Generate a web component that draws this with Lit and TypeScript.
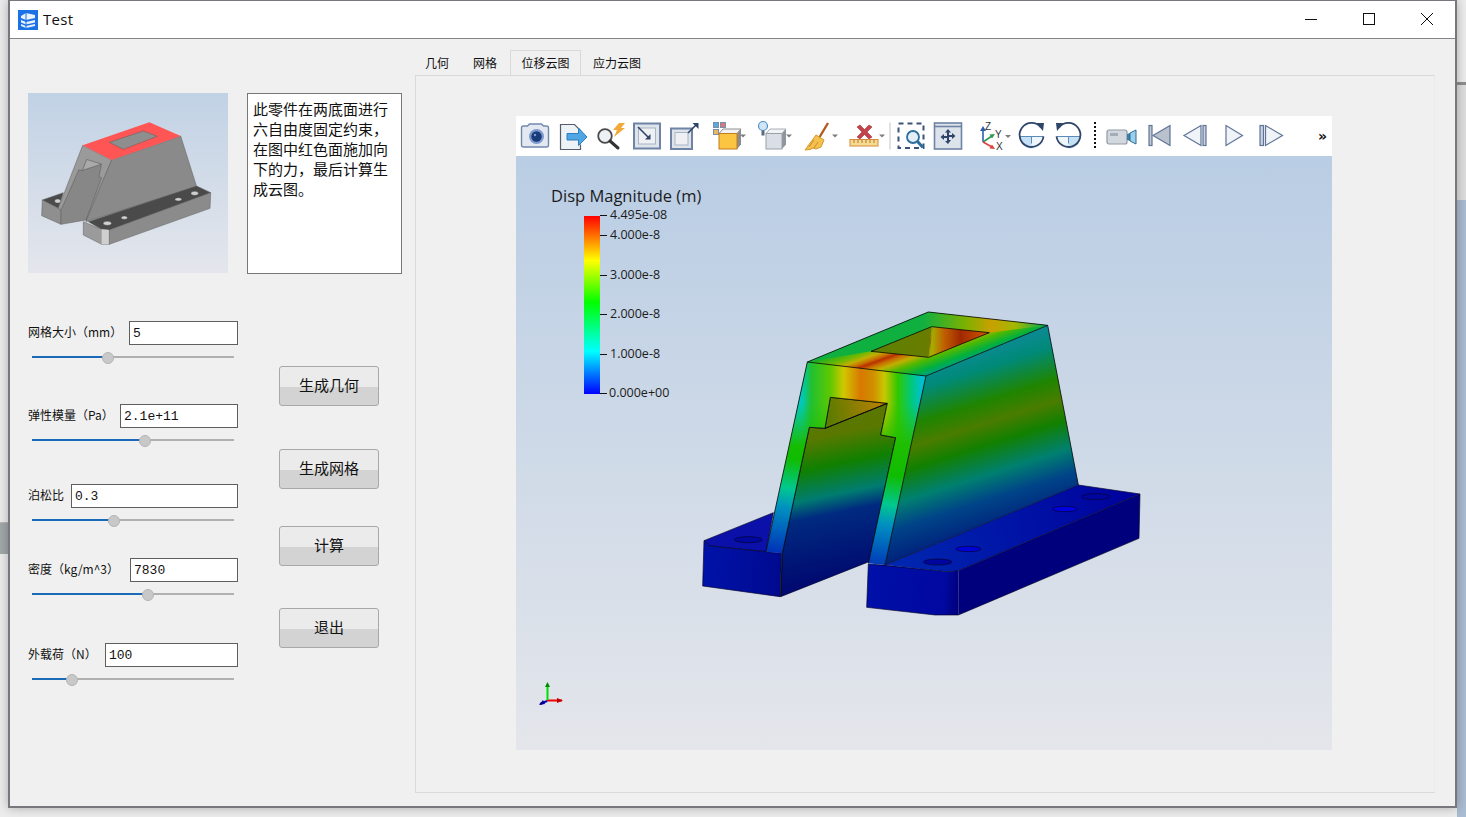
import { LitElement, css, html, svg } from "lit";
import { customElement, state } from "lit/decorators.js";

const NAVY = "#5f7497";
const PALE = "#c9d2df";

// little dropdown caret used by the toolbar buttons
const caret = (x: number) => svg`<path d="M${x} 18.5h6l-3 3z" fill="#7d7d7d"/>`;

const toolbarIcons = [
  {
    w: 37,
    icon: svg`<path d="M3.5 12q0-2 2-2h4l2-2h12l2 2h3q2 0 2 2v17q0 2-2 2h-23q-2 0-2-2z" fill="#e3e8f1" stroke="#7188ad" stroke-width="1.4"/>
      <circle cx="18.5" cy="20.5" r="7.5" fill="#7c9ace"/><circle cx="18.5" cy="20.5" r="5.2" fill="#1a3a78"/><circle cx="17" cy="19" r="1.2" fill="#7f9bd0"/>`,
  },
  {
    w: 37,
    icon: svg`<path d="M5.5 8.5h14l6 6v19h-20z" fill="#eef1f5"/>
      <path d="M25.5 19.5v-5l-6-6h-14v25h20v-5" fill="none" stroke="#555d6b" stroke-width="1.2"/>
      <path d="M12 17.5h11.5v-5.5l8.500 9-8.500 8.500v-5.500H12z" fill="#4fa6e2" stroke="#2a7fc0"/>`,
  },
  {
    w: 37,
    icon: svg`<circle cx="13" cy="20" r="6.800" fill="#eef1f4" stroke="#4a4a4a" stroke-width="1.800"/>
      <path d="M18 25l8 7" stroke="#333" stroke-width="3" stroke-linecap="round"/>
      <path d="M27 7l6 0-4 5 4 0-11 9 3-7-4 0z" fill="#f2a93a"/>`,
  },
  {
    w: 37,
    icon: svg`<rect x="5" y="7.5" width="26" height="25" fill="#dfe4ea" stroke="#6e83a5" stroke-width="2"/>
      <rect x="9.5" y="12" width="17" height="16" fill="#eef0f3" stroke="#aab5c4"/>
      <path d="M9 11l11 11" stroke="#2e4468" stroke-width="1.6"/><path d="M21.5 23.5v-5.5l-5.5 5.500z" fill="#2e4468"/>`,
  },
  {
    w: 37,
    icon: svg`<rect x="5" y="12.5" width="21" height="20.5" fill="#dfe4ea" stroke="#6e83a5" stroke-width="2"/>
      <rect x="9" y="16.5" width="13" height="12.5" fill="#eef0f3" stroke="#aab5c4"/>
      <path d="M22 17L31 8" stroke="#2e4468" stroke-width="1.6"/><path d="M32.5 7v6l-6-6z" fill="#2e4468"/>`,
  },
  {
    w: 50,
    icon: svg`<rect x="10.5" y="6.5" width="5" height="5" fill="#5da8dc" stroke="#7a8fa8"/>
      <rect x="17.5" y="6.5" width="5" height="5" fill="#d9777a" stroke="#7a8fa8"/>
      <rect x="10.5" y="13.5" width="5" height="5" fill="#e8b866" stroke="#7a8fa8"/>
      <path d="M16 17.5l4-4.500h18l-4 4.500z" fill="#f2f2f2" stroke="#8f8f8f"/>
      <path d="M34 17.5l4-4.500v15.500l-4 4.500z" fill="#8c8c8c"/>
      <rect x="16" y="17.5" width="18" height="15.5" fill="#fbc441" stroke="#c07d1e"/>${caret(37)}`,
  },
  {
    w: 48,
    icon: svg`<circle cx="10" cy="10" r="4.5" fill="#cfe6f8" stroke="#4f8fc4" stroke-width="1.2"/>
      <path d="M8.5 14.5h3v5h-3z" fill="#5b6b80"/>
      <path d="M13 17.5l4-4.500h16l-4 4.500z" fill="#f0f2f4" stroke="#a8aeb6"/>
      <path d="M29 17.5l4-4.500v15.500l-4 4.500z" fill="#8f959d"/>
      <rect x="13" y="17.5" width="16" height="15.5" fill="#dadfe6" stroke="#98a0aa"/>${caret(33)}`,
  },
  {
    w: 47,
    icon: svg`<path d="M27 7L18 22" stroke="#b35a1e" stroke-width="2.4"/>
      <path d="M15 19l8 5-3 7-5 2-3-1-3 1.500-5 .5z" fill="#f4c04e" stroke="#d49a2c"/>
      <path d="M13 24l-5 7M17 26l-4 6" stroke="#c98f25"/>${caret(31)}`,
  },
  {
    w: 38,
    icon: svg`<path d="M9 11l3-2 4.500 4.500 4.500-4.500 3 2-5 5 5 5-3 2-4.500-4.500-4.500 4.500-3-2 5-5z" fill="#c4424a" stroke="#a5323a" stroke-width=".6"/>
      <rect x="2" y="23.5" width="28" height="6.5" fill="#f6dc91" stroke="#d48a3a"/>
      <path d="M6 24v3M10 24v3M14 24v3M18 24v3M22 24v3M26 24v3" stroke="#b5742a"/>${caret(31)}`,
  },
  { w: 7, icon: svg`<path d="M4 6.5v27" stroke="#c4c4c4"/>` },
  {
    w: 37,
    icon: svg`<rect x="5.5" y="7.5" width="25" height="24.5" fill="none" stroke="#3c5378" stroke-width="2" stroke-dasharray="5 4"/>
      <circle cx="20" cy="21" r="6" fill="#e3eef8" stroke="#2a6f9c" stroke-width="1.8"/>
      <path d="M24.5 25.5L30 31.5" stroke="#2a6f9c" stroke-width="3"/>`,
  },
  {
    w: 37,
    icon: svg`<rect x="4.5" y="7" width="27" height="26" fill="#dde3eb" stroke="#6e83a5" stroke-width="1.6"/>
      <path d="M4.5 10.5h27" stroke="#6e83a5" stroke-width="1.6"/>
      <path d="M18 13l3 3.500h-2V19h3v-2l3.500 3-3.500 3v-2h-3v3h2L18 28l-3-3h2v-3h-3v2l-3.500-3L14 18v2h3v-3.500h-2z" fill="#2e4468"/>`,
  },
  {
    w: 46,
    icon: svg`<path d="M16 26V14" stroke="#2d5fb5" stroke-width="1.6"/><path d="M16 10l-3 5h6z" fill="#2d5fb5"/>
      <path d="M16 26l9-6" stroke="#2e9a4f" stroke-width="1.6"/><path d="M28 18l-5.500.5 2.500 4z" fill="#2e9a4f"/>
      <path d="M16 26l9 5" stroke="#e04040" stroke-width="1.6"/><path d="M28 33l-5.500-.5 2.500-4z" fill="#e04040"/>
      <text x="18" y="14" class="axis-letter">Z</text><text x="28" y="22" class="axis-letter">Y</text><text x="29" y="34" class="axis-letter">X</text>
      <path d="M38 19h6l-3 3z" fill="#7d7d7d"/>`,
  },
  {
    w: 37,
    icon: svg`<path d="M6.5 20.5a12 12 0 0 0 24 0z" fill="#c4e0f5"/><path d="M18.5 20.5v12a12 12 0 0 0 12-12z" fill="#eef6fc"/>
      <path d="M6.5 20.5h24M18.5 20.5v7" stroke="#5b8bb8"/>
      <path d="M28 11.5A12 12 0 1 0 30.5 20.5" fill="none" stroke="#2f4569" stroke-width="1.8"/><path d="M23 7l8 0-1 8z" fill="#2f4569"/>`,
  },
  {
    w: 37,
    icon: svg`<path d="M6.5 20.5a12 12 0 0 0 24 0z" fill="#eef6fc"/><path d="M18.5 20.5h12a12 12 0 0 1-12 12z" fill="#c4e0f5"/>
      <path d="M6.5 20.5h24M18.5 20.5v7" stroke="#5b8bb8"/>
      <path d="M9 11.5A12 12 0 1 1 6.5 20.5" fill="none" stroke="#2f4569" stroke-width="1.8"/><path d="M14 7l-8 0 1 8z" fill="#2f4569"/>`,
  },
  { w: 17, icon: svg`<path d="M8 6v26" stroke="#111" stroke-width="2" stroke-dasharray="2 2"/>` },
  {
    w: 37,
    icon: svg`<rect x="3" y="14" width="20" height="14" rx="2" fill="#d3d8df" stroke="#8f99a8" stroke-width="1.2"/>
      <rect x="6" y="17" width="8" height="3" fill="#a4acb7"/>
      <path d="M23 18l3-1v8l-3-1z" fill="#3c7ea8"/><path d="M26 17l6-3v14l-6-3z" fill="#9bd0ec" stroke="#2f6c92"/>`,
  },
  {
    w: 37,
    icon: svg`<rect x="8" y="9.5" width="3" height="20" fill="#c0c8d3" stroke="${NAVY}" stroke-width="1.2"/><path d="M29 9.5v20L12 19.500z" fill="#b9c1cc" stroke="${NAVY}" stroke-width="1.2"/>`,
  },
  {
    w: 37,
    icon: svg`<path d="M23 9.5v20L6 19.500z" fill="#f0f3f7" stroke="${NAVY}" stroke-width="1.2"/><rect x="25" y="9.5" width="3" height="20" fill="${PALE}" stroke="${NAVY}" stroke-width="1.2"/>`,
  },
  { w: 37, icon: svg`<path d="M11 9.5v20l16.500-10z" fill="#f0f3f7" stroke="${NAVY}" stroke-width="1.2"/>` },
  {
    w: 37,
    icon: svg`<rect x="8" y="9.5" width="3.5" height="20" fill="${PALE}" stroke="${NAVY}" stroke-width="1.2"/><path d="M13.5 9.5v20l17-10z" fill="#f0f3f7" stroke="${NAVY}" stroke-width="1.2"/>`,
  },
];

const fields = [
  { label: "网格大小（mm）", labelWidth: 101, value: "5", filled: 75 },
  { label: "弹性模量（Pa）", labelWidth: 92, value: "2.1e+11", filled: 112 },
  { label: "泊松比", labelWidth: 43, value: "0.3", filled: 81 },
  { label: "密度（kg/m^3）", labelWidth: 102, value: "7830", filled: 115 },
  { label: "外载荷（N）", labelWidth: 77, value: "100", filled: 39 },
];

const actions = ["生成几何", "生成网格", "计算", "退出"];
const tabs = ["几何", "网格", "位移云图", "应力云图"];
const legendTicks = [
  { y: 215, text: "4.495e-08", x: 610 },
  { y: 235, text: "4.000e-8", x: 610 },
  { y: 275, text: "3.000e-8", x: 610 },
  { y: 314, text: "2.000e-8", x: 610 },
  { y: 354, text: "1.000e-8", x: 610 },
  { y: 393, text: "0.000e+00", x: 609 },
];

@customElement("app-root")
export class AppRoot extends LitElement {
  @state() activeTab = 2;

  static styles = css`
    :host {
      display: block;
      position: relative;
      width: 1466px;
      height: 817px;
      overflow: hidden;
      background: #ececec;
      font-family: "Noto Sans CJK SC", "Noto Sans", sans-serif;
      color: #111;
    }
    .desk-left {
      position: absolute;
      left: 0;
      top: 522px;
      width: 8px;
      height: 31px;
      background: #a2a8aa;
      border-top: 1px solid #b8b8b8;
    }
    .desk-right {
      position: absolute;
      left: 1457px;
      top: 200px;
      width: 9px;
      height: 617px;
      background: #aabcd2;
    }
    .desk-band {
      position: absolute;
      left: 1457px;
      top: 82px;
      width: 9px;
      height: 118px;
      background: #dedede;
      border-top: 3px solid #8e8e8e;
    }
    .window {
      position: relative;
      box-sizing: border-box;
      margin-left: 8px;
      width: 1449px;
      height: 808px;
      display: flex;
      flex-direction: column;
      background: #f0f0f0;
      border: 2px solid #77777d;
      border-top-width: 1px;
      box-shadow: 0 0 10px rgba(0, 0, 0, 0.28);
    }
    .titlebar {
      flex: none;
      box-sizing: border-box;
      height: 38px;
      display: flex;
      align-items: center;
      padding-left: 8px;
      background: #fff;
      border-bottom: 1px solid #85858a;
    }
    .titlebar .logo {
      flex: none;
      margin-right: 5px;
    }
    .title {
      flex: 1;
      padding-bottom: 2px;
      font-family: "Open Sans", sans-serif;
      font-size: 15px;
      letter-spacing: 0.3px;
    }
    .winbtn {
      width: 58px;
      height: 37px;
      display: flex;
      align-items: center;
      justify-content: center;
      padding-bottom: 2px;
      box-sizing: border-box;
    }
    .winbtn:last-child {
      margin-right: -1px;
    }
    .content {
      flex: 1;
      min-height: 0;
      display: flex;
    }
    .left {
      flex: none;
      box-sizing: border-box;
      width: 405px;
      padding: 54px 0 0 18px;
    }
    .intro {
      display: flex;
      gap: 19px;
      margin-bottom: 47px;
    }
    .preview {
      display: block;
      width: 200px;
      height: 180px;
    }
    .note {
      box-sizing: border-box;
      width: 155px;
      height: 181px;
      padding: 5px 5px;
      background: #fff;
      border: 1px solid #777;
      font-size: 15px;
      line-height: 20px;
    }
    .controls {
      display: flex;
    }
    .form {
      display: grid;
      grid-template-rows: 83px 80px 74px 85px 50px;
      width: 210px;
    }
    .input-row {
      display: flex;
      align-items: center;
      height: 24px;
    }
    .input-row label {
      flex: none;
      padding-bottom: 3px;
      font-size: 12px;
      white-space: nowrap;
    }
    .field {
      flex: 1;
      min-width: 0;
      box-sizing: border-box;
      height: 24px;
      line-height: 22px;
      padding: 1px 3px;
      background: #fff;
      border: 1px solid #5f5f5f;
      font-family: "Liberation Mono", monospace;
      font-size: 13px;
    }
    .slider {
      position: relative;
      width: 202px;
      height: 2px;
      margin: 11px 0 0 4px;
      background: #b0b0b0;
    }
    .slider .fill {
      height: 2px;
      background: #1a6ab8;
    }
    .slider .thumb {
      position: absolute;
      top: -4px;
      width: 10px;
      height: 10px;
      margin-left: -5px;
      border-radius: 50%;
      background: #c8c8c8;
      border: 0.5px solid #b5b5b5;
    }
    .actions {
      display: grid;
      grid-template-rows: 83px 77px 82px 40px;
      margin-left: 41px;
      padding-top: 45px;
    }
    .action {
      box-sizing: border-box;
      width: 100px;
      height: 40px;
      padding: 0 0 4px;
      border: 1px solid #a8a8a8;
      border-radius: 3px;
      background: linear-gradient(#ebebeb 0 20px, #d3d3d3 20px);
      font-family: inherit;
      font-size: 15px;
      color: #111;
    }
    .right {
      flex: none;
      width: 1020px;
      padding-top: 11px;
    }
    .tabs {
      display: flex;
      height: 25px;
      margin-left: -2px;
    }
    .tab {
      box-sizing: border-box;
      padding: 2px 11px 0;
      font-size: 12px;
      line-height: 20px;
      border: 1px solid transparent;
      border-bottom: 0;
      white-space: nowrap;
    }
    .tab.active {
      margin-left: 1px;
      padding: 2px 10.5px 0;
      border-color: #d9d9d9;
    }
    .pane {
      box-sizing: border-box;
      height: 718px;
      padding: 40px 0 0 100px;
      border: 1px solid #d9d9d9;
      border-right-color: #ebebeb;
    }
    .viewer {
      width: 816px;
      height: 634px;
      display: flex;
      flex-direction: column;
    }
    .toolbar {
      flex: none;
      height: 40px;
      display: flex;
      align-items: center;
      padding-left: 2px;
      background: #fff;
    }
    .toolbar svg {
      display: block;
      flex: none;
    }
    .axis-letter {
      font-family: "Liberation Sans", sans-serif;
      font-size: 10px;
      fill: #333;
    }
    .overflow {
      margin-left: auto;
      padding: 0 5px 0 0;
      font-family: "DejaVu Sans", sans-serif;
      font-weight: 700;
      font-size: 14px;
      color: #111;
    }
    .scene {
      display: block;
      width: 816px;
      height: 594px;
    }
    .legend-title {
      font-family: "Open Sans", sans-serif;
      font-size: 16.5px;
      fill: #1c1c1c;
    }
    .legend-label {
      font-family: "Open Sans", sans-serif;
      font-size: 12.5px;
      fill: #1c1c1c;
    }
  `;

  private renderPreview() {
    return svg`<svg class="preview" viewBox="84 279 600 540">
      <defs>
        <linearGradient id="pv-bg" x1="0" y1="0" x2="0" y2="1"><stop offset="0" stop-color="#c1d2e5"/><stop offset="1" stop-color="#e4e6ec"/></linearGradient>
      </defs>
      <rect x="84" y="279" width="600" height="540" fill="url(#pv-bg)"/>
      <g stroke="#5d5d5d" stroke-width="1.5" stroke-linejoin="round">
        <polygon points="127,600 190,578 175,625" fill="#4b4b4b"/>
        <polygon points="127,600 175,625 183,630 183,673 125,647" fill="#8f8f8f"/>
        <polygon points="236,510 247,511 305,492 297,530 305,533 258,660 183,673 183,630" fill="#878787"/>
        <polygon points="260,478 305,492 247,511" fill="#aaa"/>
        <polygon points="248,436 335,480 258,662 305,533 297,530 305,492 260,478 247,511 236,510 183,630 175,625" fill="#9a9a9a"/>
        <polygon points="335,480 542,408 590,560 258,665" fill="#8a8a8a"/>
        <polygon points="248,436 448,367 542,408 335,480" fill="#ff5555" stroke="none"/>
        <polygon points="328,427 430,393 472,409 370,448" fill="#8e8e8e"/>
        <polygon points="265,665 590,558 632,578 328,690 305,688" fill="#4a4a4a"/>
        <polygon points="250,665 305,688 328,690 328,733 305,733 250,705" fill="#9b9b9b"/>
        <polygon points="305,688 328,690 328,733 305,733" fill="#cfcfcf" stroke="none"/>
        <polygon points="328,690 632,578 630,625 328,733" fill="#8b8b8b"/>
      </g>
      <g fill="#cfd2d4" stroke="#3a3a3a">
        <ellipse cx="322" cy="670" rx="12" ry="6"/><ellipse cx="373" cy="653" rx="9" ry="5"/>
        <ellipse cx="535" cy="598" rx="10" ry="5"/><ellipse cx="584" cy="580" rx="11" ry="6"/>
        <ellipse cx="173" cy="603" rx="9" ry="6"/>
      </g>
    </svg>`;
  }

  // Model drawn in a 3x coordinate system so the outline is easy to read off
  private renderModel() {
    return svg`<g transform="translate(690 300) scale(.33333)" stroke-linejoin="round">
      <g stroke="#05052a" stroke-width="2">
        <polygon points="42,722 250,638 228,755 60,738" fill="#0a10a8"/>
        <polygon points="42,722 60,738 275,760 270,890 38,858" fill="url(#left-foot)"/>
        <ellipse cx="175" cy="719" rx="42" ry="9" fill="#0008a0"/>
        <polygon points="358,382 405,385 592,310 572,405 617,413 537,785 272,890 277,760" fill="url(#slot)"/>
        <polygon points="421,292 592,310 405,385" fill="url(#ceiling)"/>
      </g>
      <polygon points="352,186 708,228 585,795 535,790 617,413 572,405 592,310 421,292 405,385 358,382 277,760 228,755" fill="url(#arch)"/>
      <polygon points="352,186 708,228 585,795 535,790 617,413 572,405 592,310 421,292 405,385 358,382 277,760 228,755" fill="url(#arch-top)" mask="url(#arch-fade)"/>
      <polygon points="708,228 1073,76 1165,555 585,795" fill="url(#side)"/>
      <polygon points="352,186 715,36 1073,76 708,228" fill="url(#top)"/>
      <polygon points="352,186 715,36 1073,76 898,98 725,80 543,154" fill="url(#top-back)"/>
      <polygon points="543,154 725,80 716,172" fill="url(#hole-left)"/>
      <polygon points="728,80 898,98 716,172" fill="url(#hole-right)"/>
      <g fill="none" stroke="#050505" stroke-width="2.4">
        <polygon points="543,154 725,80 898,98 716,172"/>
        <path d="M728 80L716 172" stroke-width="1" stroke="#6b7a00"/>
        <path d="M352 186L715 36L1073 76L1165 555M708 228L1073 76M352 186L708 228L585 795M352 186L228 755M358 382L277 760M358 382L405 385L421 292L592 310L572 405L617 413L535 790M405 385L592 310M277 760L272 890"/>
      </g>
      <polygon points="585,795 1165,555 1350,582 805,812 770,815" fill="url(#right-top)"/>
      <polygon points="535,792 585,795 770,815 805,812 805,945 735,945 530,922" fill="url(#right-front)"/>
      <polygon points="805,812 1350,582 1347,715 805,945" fill="#00007c"/>
      <g fill="none" stroke="#05052a" stroke-width="2">
        <path d="M535 792L770 815L805 812L1350 582L1165 555L585 795M1350 582L1347 715L805 945L735 945L530 922L535 792"/>
        <ellipse cx="1217" cy="590" rx="42" ry="9" fill="#0005a0"/>
        <ellipse cx="1125" cy="627" rx="38" ry="8" fill="#0000e0"/>
        <ellipse cx="835" cy="747" rx="38" ry="8" fill="#0000d8"/>
        <ellipse cx="743" cy="786" rx="43" ry="9" fill="#0005a0"/>
      </g>
    </g>`;
  }

  private renderScene() {
    return svg`<svg class="scene" viewBox="516 156 816 594">
      <defs>
        <linearGradient id="bg" x1="0" y1="0" x2="0" y2="1"><stop offset="0" stop-color="#b9cde4"/><stop offset="1" stop-color="#e4e6eb"/></linearGradient>
        <linearGradient id="jet" x1="0" y1="0" x2="0" y2="1">
          <stop offset="0" stop-color="#ff0000"/><stop offset=".25" stop-color="#ffff00"/><stop offset=".486" stop-color="#00ff00"/><stop offset=".76" stop-color="#00ffff"/><stop offset="1" stop-color="#0000ff"/>
        </linearGradient>
        <linearGradient id="side" gradientUnits="userSpaceOnUse" x1="123" y1="390" x2="282" y2="893">
          <stop offset="0" stop-color="#0a8a90"/><stop offset=".1" stop-color="#008a78"/><stop offset=".28" stop-color="#1f8500"/><stop offset=".4" stop-color="#4a7c00"/><stop offset=".52" stop-color="#128000"/><stop offset=".68" stop-color="#008070"/><stop offset=".82" stop-color="#004488"/><stop offset="1" stop-color="#00207c"/>
        </linearGradient>
        <linearGradient id="slot" gradientUnits="userSpaceOnUse" x1="96" y1="472" x2="181" y2="885">
          <stop offset="0" stop-color="#5a7800"/><stop offset=".21" stop-color="#108000"/><stop offset=".42" stop-color="#007c70"/><stop offset=".55" stop-color="#002a80"/><stop offset="1" stop-color="#000a70"/>
        </linearGradient>
        <linearGradient id="ceiling" gradientUnits="userSpaceOnUse" x1="420" y1="350" x2="590" y2="310">
          <stop offset="0" stop-color="#5e7c00"/><stop offset="1" stop-color="#c08000"/>
        </linearGradient>
        <linearGradient id="arch" gradientUnits="userSpaceOnUse" x1="520" y1="300" x2="440" y2="790">
          <stop offset="0" stop-color="#30c000"/><stop offset=".42" stop-color="#10bc00"/><stop offset=".6" stop-color="#00c890"/><stop offset=".72" stop-color="#0090c0"/><stop offset="1" stop-color="#0030b8"/>
        </linearGradient>
        <linearGradient id="arch-top" gradientUnits="userSpaceOnUse" x1="335" y1="250" x2="695" y2="250">
          <stop offset="0" stop-color="#00c8c0"/><stop offset=".08" stop-color="#20c030"/><stop offset=".24" stop-color="#60c800"/><stop offset=".35" stop-color="#d0c800"/><stop offset=".49" stop-color="#d87800"/><stop offset=".6" stop-color="#d09000"/><stop offset=".69" stop-color="#c8c800"/><stop offset=".8" stop-color="#30c800"/><stop offset=".92" stop-color="#00c880"/><stop offset="1" stop-color="#00c0d0"/>
        </linearGradient>
        <linearGradient id="arch-fade-g" gradientUnits="userSpaceOnUse" x1="0" y1="310" x2="0" y2="440">
          <stop offset="0" stop-color="#fff"/><stop offset="1" stop-color="#000"/>
        </linearGradient>
        <mask id="arch-fade" maskUnits="userSpaceOnUse" x="0" y="0" width="1400" height="1000"><rect width="1400" height="1000" fill="url(#arch-fade-g)"/></mask>
        <linearGradient id="top" gradientUnits="userSpaceOnUse" x1="569.4" y1="85.4" x2="630.6" y2="254.6">
          <stop offset="0" stop-color="#00a878"/><stop offset=".15" stop-color="#20b020"/><stop offset=".3" stop-color="#70b800"/><stop offset=".38" stop-color="#c0b000"/><stop offset=".45" stop-color="#c87000"/><stop offset=".5" stop-color="#b83000"/><stop offset=".56" stop-color="#c87000"/><stop offset=".64" stop-color="#c0b000"/><stop offset=".75" stop-color="#50b800"/><stop offset=".9" stop-color="#00b040"/><stop offset="1" stop-color="#00a080"/>
        </linearGradient>
        <linearGradient id="top-back" gradientUnits="userSpaceOnUse" x1="700" y1="60" x2="1070" y2="60">
          <stop offset="0" stop-color="#10b040"/><stop offset=".35" stop-color="#80b000"/><stop offset=".55" stop-color="#c8a000"/><stop offset=".75" stop-color="#a0b800"/><stop offset="1" stop-color="#00a860"/>
        </linearGradient>
        <linearGradient id="hole-left" gradientUnits="userSpaceOnUse" x1="550" y1="150" x2="725" y2="120">
          <stop offset="0" stop-color="#5c8000"/><stop offset="1" stop-color="#6a7c00"/>
        </linearGradient>
        <linearGradient id="hole-right" gradientUnits="userSpaceOnUse" x1="728" y1="100" x2="880" y2="100">
          <stop offset="0" stop-color="#a8a800"/><stop offset=".22" stop-color="#c06000"/><stop offset=".55" stop-color="#a02800"/><stop offset="1" stop-color="#c85000"/>
        </linearGradient>
        <linearGradient id="right-top" gradientUnits="userSpaceOnUse" x1="585" y1="795" x2="1350" y2="582">
          <stop offset="0" stop-color="#0028b0"/><stop offset="1" stop-color="#00009c"/>
        </linearGradient>
        <linearGradient id="right-front" gradientUnits="userSpaceOnUse" x1="530" y1="860" x2="805" y2="880">
          <stop offset="0" stop-color="#0010a8"/><stop offset=".85" stop-color="#0008a0"/><stop offset="1" stop-color="#00007c"/>
        </linearGradient>
        <linearGradient id="left-foot" gradientUnits="userSpaceOnUse" x1="40" y1="800" x2="270" y2="820">
          <stop offset="0" stop-color="#0012a8"/><stop offset="1" stop-color="#000a90"/>
        </linearGradient>
      </defs>
      <rect x="516" y="156" width="816" height="594" fill="url(#bg)"/>
      <text x="551" y="202" class="legend-title">Disp Magnitude (m)</text>
      <rect x="584" y="216" width="16" height="178" fill="url(#jet)"/>
      ${legendTicks.map(
        (t) => svg`<path d="M600 ${t.y}.5h7" stroke="#111"/><text x="${t.x}" y="${t.y + 4}" class="legend-label">${t.text}</text>`
      )}
      ${this.renderModel()}
      <g fill="none" stroke-width="2">
        <path d="M547 700.5h15" stroke="#f00000"/><path d="M547.5 700v-15" stroke="#00e000"/><path d="M547 701l-7 3" stroke="#0000c0"/>
      </g>
      <path d="M545 687l2.5-5 2.5 5z" fill="#008a00"/><path d="M557 698l6 2.5-6 2.5z" fill="#c00000"/><path d="M543 700l-4 5 6-1z" fill="#000090"/>
    </svg>`;
  }

  render() {
    return html`
      <div class="desk-left"></div>
      <div class="desk-band"></div>
      <div class="desk-right"></div>
      <div class="window">
        <div class="titlebar">
          <svg class="logo" width="20" height="20" viewBox="0 0 20 20">
            <rect width="20" height="20" fill="#1b72e4" />
            <path d="M3 6l5-3 9 2v3l-9 2-5-2zM3 10l5 2 9-2v2.5l-9 2-5-2zM3 14l5 2 9-2v2l-9 2-5-2z" fill="#e8f1fd" />
            <path d="M8 3v15" stroke="#1b72e4" />
          </svg>
          <span class="title">Test</span>
          <div class="winbtn">
            <svg width="12" height="12"><path d="M0 6.5h12" stroke="#111" /></svg>
          </div>
          <div class="winbtn">
            <svg width="12" height="12"><rect x=".5" y=".5" width="11" height="11" fill="none" stroke="#111" /></svg>
          </div>
          <div class="winbtn">
            <svg width="12" height="12"><path d="M0 0l12 12M12 0L0 12" stroke="#111" /></svg>
          </div>
        </div>
        <div class="content">
          <div class="left">
            <div class="intro">
              ${this.renderPreview()}
              <div class="note">此零件在两底面进行六自由度固定约束，在图中红色面施加向下的力，最后计算生成云图。</div>
            </div>
            <div class="controls">
              <div class="form">
                ${fields.map(
                  (f) => html`<div>
                    <div class="input-row">
                      <label style="width:${f.labelWidth}px">${f.label}</label>
                      <div class="field">${f.value}</div>
                    </div>
                    <div class="slider">
                      <div class="fill" style="width:${f.filled}px"></div>
                      <div class="thumb" style="left:${f.filled}px"></div>
                    </div>
                  </div>`
                )}
              </div>
              <div class="actions">
                ${actions.map((a) => html`<button class="action">${a}</button>`)}
              </div>
            </div>
          </div>
          <div class="right">
            <div class="tabs">
              ${tabs.map(
                (t, i) => html`<div class="tab ${i === this.activeTab ? "active" : ""}">${t}</div>`
              )}
            </div>
            <div class="pane">
              <div class="viewer">
                <div class="toolbar">
                  ${toolbarIcons.map(
                    (b) => html`<svg width=${b.w} height="40" viewBox="0 0 ${b.w} 40">${b.icon}</svg>`
                  )}
                  <span class="overflow">»</span>
                </div>
                ${this.renderScene()}
              </div>
            </div>
          </div>
        </div>
      </div>
    `;
  }
}
